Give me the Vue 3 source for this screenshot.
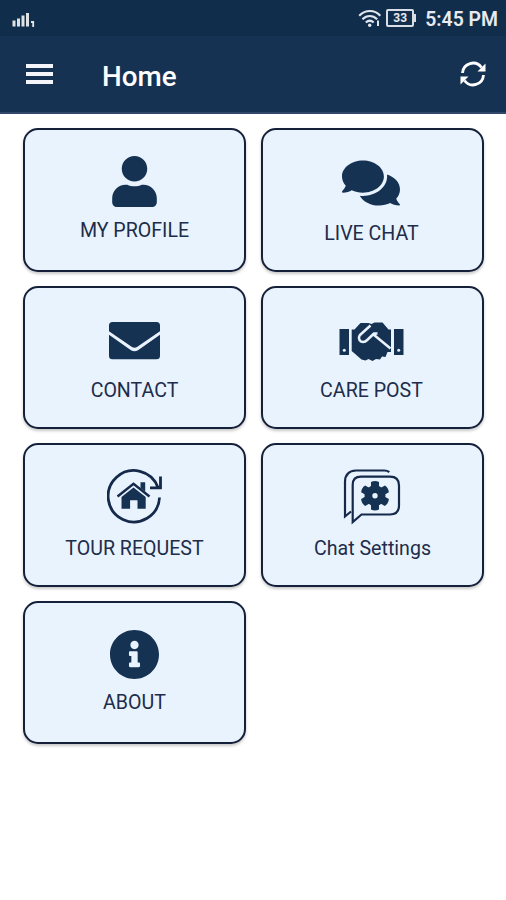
<template>
  <div class="screen">
    <div class="status-bar">
      <svg class="signal" width="23" height="17" viewBox="0 0 23 17">
        <path d="M2 9.500v6M6.500 7.500v8M11 4.500v11M15.500 2v13.500" stroke="#dfe2e2" stroke-width="3" fill="none" />
        <path d="M19 11h2.200v5" stroke="#e6e8e8" stroke-width="1.800" fill="none" />
      </svg>
      <div class="status-right">
        <svg class="wifi" width="24" height="19" viewBox="0 0 24 19" fill="none" stroke="#e2e5ec" stroke-width="2.200">
          <path d="M1.200 6.700C7.500.4 16.500.4 22.300 6.700" />
          <path d="M4.400 10.300c4.500-4.200 10.300-4.200 14.800 0" />
          <path d="M7.800 13.500c2.500-2.200 5.400-2.200 7.900 0" />
          <circle cx="11.700" cy="16.200" r="1.700" fill="#e2e5ec" stroke="none" />
          <path d="M20 11.500v5.500" stroke-width="2" />
        </svg>
        <div class="battery">33</div>
        <span class="clock">5:45 PM</span>
      </div>
    </div>

    <header class="app-bar">
      <button class="menu" aria-label="Menu">
        <span></span>
        <span></span>
        <span></span>
      </button>
      <h1>Home</h1>
      <button class="refresh" aria-label="Refresh">
        <svg width="26" height="26" viewBox="0 0 26 26">
          <path d="M2.500 12A10.500 10.500 0 0 1 21.500 6.500M23.500 14A10.500 10.500 0 0 1 4.500 19.500" fill="none" stroke="#fff" stroke-width="2.800" />
          <path d="M25.500 2.500v8h-8zM.5 23.500v-8h8z" fill="#fff" />
        </svg>
      </button>
    </header>

    <main class="grid">
      <div v-for="item in items" :key="item.id" :class="['card', item.id]">
        <svg v-if="item.id === 'profile'" width="45" height="51" viewBox="0 0 448 512">
          <path d="M224 256c70.700 0 128-57.300 128-128S294.700 0 224 0 96 57.300 96 128s57.300 128 128 128zm89.600 32h-16.700c-22.200 10.200-46.900 16-72.900 16s-50.600-5.800-72.900-16h-16.700C60.200 288 0 348.200 0 422.400V464c0 26.500 21.500 48 48 48h352c26.500 0 48-21.500 48-48v-41.600c0-74.200-60.200-134.400-134.400-134.400z" />
        </svg>

        <svg v-else-if="item.id === 'chat'" width="58" height="46" viewBox="0 32 576 448">
          <path d="M416 192c0-88.400-93.100-160-208-160S0 103.600 0 192c0 34.300 14.100 65.900 38 92-13.400 30.200-35.500 54.200-35.800 54.500-2.200 2.300-2.800 5.700-1.500 8.700S4.800 352 8 352c36.600 0 66.900-12.300 88.700-25 32.200 15.700 70.300 25 111.300 25 114.900 0 208-71.600 208-160zm122 220c23.900-26 38-57.700 38-92 0-66.900-53.500-124.200-129.300-148.100.9 6.600 1.300 13.300 1.300 20.100 0 105.900-107.700 192-240 192-10.800 0-21.300-.8-31.700-1.900C207.800 439.600 281.800 480 368 480c41 0 79.100-9.200 111.300-25 21.800 12.700 52.100 25 88.700 25 3.200 0 6.100-1.900 7.300-4.800 1.300-2.900.7-6.300-1.500-8.700-.3-.2-22.400-24.200-35.800-54.500z" />
        </svg>

        <svg v-else-if="item.id === 'contact'" width="51" height="38" viewBox="0 0 51 38">
          <path d="M3.500 0h44A3.500 3.500 0 0 1 51 3.500v5.800L28 25q-2.500 1.600-5 0L0 9.300V3.500A3.500 3.500 0 0 1 3.500 0z" />
          <path d="M0 12.800l22 15.400q3.500 2 7 0l22-15.400v21a3.500 3.500 0 0 1-3.500 3.500h-44A3.500 3.500 0 0 1 0 33.800z" />
        </svg>

        <svg v-else-if="item.id === 'care'" width="65" height="40" viewBox="0 0 65 40">
          <path d="M.5 7H10v26H.5zM55 7h9.500v26H55z" />
          <path d="M12.700 7.500h2.800l6-6.500h8l3 1 3-1.500h8l6 7h2.500v22.500h-3.500l-2 5-3.500-.5-2 3-4-.5-3.500 2-4-2-3 1.500-4-1-9.800-8.500z" />
          <path d="M31.500 3.500L21 13q-2.500 3.500.7 6.300 3.500 1.700 6.500-1.300l6.800-6.500h3.500M34.500 12.500L51.500 26.500" fill="none" stroke="#e9f3fe" stroke-width="2.500" stroke-linejoin="round" />
          <circle cx="5.300" cy="28.300" r="1.500" fill="#e9f3fe" />
          <circle cx="59.700" cy="28.300" r="1.500" fill="#e9f3fe" />
        </svg>

        <svg v-else-if="item.id === 'tour'" width="56" height="56" viewBox="0 0 56 56">
          <path d="M52.500 28.500A25.700 25.700 0 1 1 51 18.500M53.500 7.500v11.300H43" fill="none" stroke="#15294b" stroke-width="2.800" />
          <path d="M10.500 27.500l16-12.700 16 12.700" fill="none" stroke="#15294b" stroke-width="2.500" />
          <path d="M33.500 13.200h4.700v9.300l-4.700-3.500zM26.500 18.500L38.700 28v11.800h-8.200v-8.500h-7.400v8.500h-8.600V28z" />
        </svg>

        <svg v-else-if="item.id === 'settings'" width="58" height="56" viewBox="0 0 58 56">
          <g fill="none" stroke="#15294b" stroke-width="2.200">
            <path d="M46.300 3.200q-2-1.700-5-1.700H13Q2 2 2 13v34.500l6-5" />
            <path d="M9.700 53V16q0-8.300 8.300-8.300h29q9 0 9 8.800v20q0 9-9 9H18.500z" />
          </g>
          <path
            v-for="angle in [0, 60, 120]"
            :key="angle"
            d="M28 13q4-2 8 0v27.400q-4 2-8 0z"
            :transform="`rotate(${angle} 32 26.700)`"
          />
          <circle cx="32" cy="26.700" r="10.500" />
          <circle cx="32" cy="26.700" r="2.700" fill="#e9f3fe" />
        </svg>

        <svg v-else width="49" height="49" viewBox="8 8 496 496">
          <path d="M256 8C119.043 8 8 119.083 8 256c0 136.997 111.043 248 248 248s248-111.003 248-248C504 119.083 392.957 8 256 8zm0 110c23.196 0 42 18.804 42 42s-18.804 42-42 42-42-18.804-42-42 18.804-42 42-42zm56 254c0 6.627-5.373 12-12 12h-88c-6.627 0-12-5.373-12-12v-24c0-6.627 5.373-12 12-12h12v-64h-12c-6.627 0-12-5.373-12-12v-24c0-6.627 5.373-12 12-12h64c6.627 0 12 5.373 12 12v100h12c6.627 0 12 5.373 12 12v24z" />
        </svg>

        <span class="label">{{ item.label }}</span>
      </div>
    </main>
  </div>
</template>

<script setup>
const items = [
  { id: 'profile', label: 'MY PROFILE' },
  { id: 'chat', label: 'LIVE CHAT' },
  { id: 'contact', label: 'CONTACT' },
  { id: 'care', label: 'CARE POST' },
  { id: 'tour', label: 'TOUR REQUEST' },
  { id: 'settings', label: 'Chat Settings' },
  { id: 'about', label: 'ABOUT' },
];
</script>

<style>
body { margin: 0; background: #fff; }
</style>

<style scoped>
.screen { width: 506px; height: 900px; overflow: hidden; background: #fff; font-family: Roboto, "Liberation Sans", sans-serif; }
.status-bar { box-sizing: border-box; height: 36px; padding: 0 9px 0 12px; display: flex; align-items: center; justify-content: space-between; background: #102d4b; }
.signal { margin-top: 3px; }
.status-right { display: flex; align-items: center; color: #e8eaf0; }
.wifi { margin-right: 4px; }
.battery { position: relative; box-sizing: border-box; width: 28px; height: 18px; margin-right: 11px; border: 2px solid #d9dde6; border-radius: 2px; font-size: 12px; font-weight: 700; line-height: 14px; text-align: center; }
.battery::after { content: ""; position: absolute; left: 26px; top: 3px; width: 2px; height: 8px; background: #d9dde6; }
.clock { font-size: 19.4px; font-weight: 600; line-height: 36px; padding-top: 3px; margin-right: -1px; }
.app-bar { box-sizing: border-box; height: 78px; padding: 0 20px 0 26px; display: flex; align-items: center; background: #163253; border-bottom: 2px solid #31486a; }
button { padding: 0; border: none; background: none; }
.menu { width: 27px; display: flex; flex-direction: column; gap: 4px; }
.menu span { height: 4px; background: #f4f5fa; }
h1 { margin: 5px 0 0 49px; flex: 1; color: #fff; font-size: 27.8px; font-weight: 500; line-height: 34px; }
.refresh { width: 26px; height: 26px; }
svg { display: block; flex: none; }
.grid { display: grid; grid-template-columns: 223px 223px; grid-auto-rows: 143.5px; gap: 14px 15px; padding: 14px 22px 0 23px; }
.card { box-sizing: border-box; display: flex; flex-direction: column; align-items: center; border: 2px solid #15203a; border-radius: 15px; background: #e9f3fe; box-shadow: 0 2px 3px rgba(0, 0, 0, 0.22); }
.card svg { fill: #163253; }
.label { color: #202c49; font-size: 19.6px; line-height: 24px; white-space: nowrap; }
.profile { padding-top: 26px; gap: 12px; }
.chat { padding-top: 30px; gap: 16px; }
.chat svg, .care svg { margin-left: -3px; }
.chat .label, .care .label { margin-left: -2px; }
.contact { padding-top: 34px; gap: 19px; }
.care { padding-top: 34px; gap: 17px; }
.tour, .settings { padding-top: 24px; gap: 12px; }
.settings svg { margin-left: -1px; }
.about { padding-top: 27px; gap: 12px; }
</style>
